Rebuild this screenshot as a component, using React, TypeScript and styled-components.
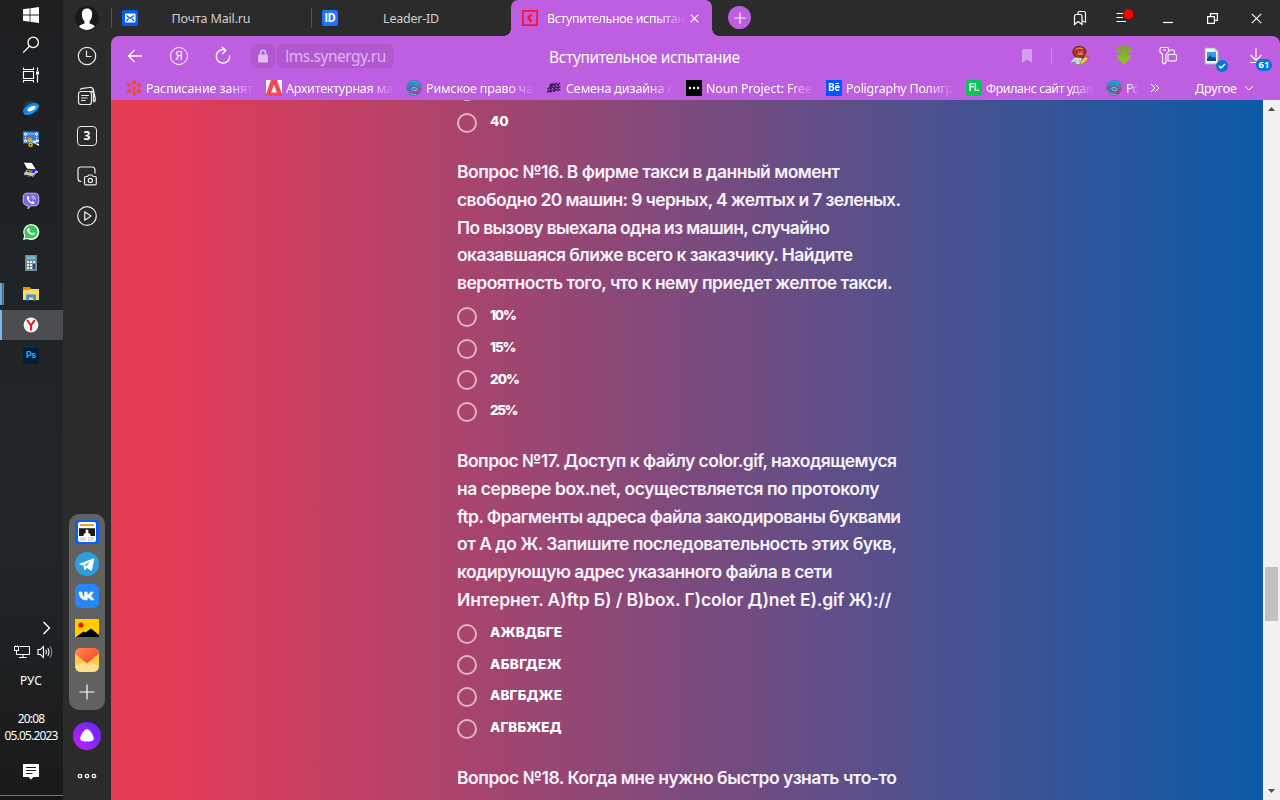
import React, { useLayoutEffect, useRef } from "react";
import styled, { createGlobalStyle, css } from "styled-components";

const PURPLE = "#be5ee0";
const UI_FONT = `"Noto Sans", "Open Sans", sans-serif`;

const GlobalStyle = createGlobalStyle`
  *, *::before, *::after { box-sizing: border-box; }
  html, body { margin: 0; padding: 0; }
  body {
    width: 1280px;
    height: 800px;
    overflow: hidden;
    background: #2b2b2b;
    font-family: ${UI_FONT};
  }
  svg { display: block; flex: none; }
`;

/* Text line whose tracking is tuned so that it spans a given width. */
const Line = styled.span`
  display: block;
  width: max-content;
  white-space: pre;
`;

function FitText({ width, children }: { width: number; children: string }) {
  const ref = useRef<HTMLSpanElement>(null);
  useLayoutEffect(() => {
    const el = ref.current;
    if (!el) return;
    el.style.letterSpacing = "0px";
    const natural = el.getBoundingClientRect().width;
    el.style.letterSpacing = `${(width - natural) / Math.max(1, children.length - 1)}px`;
  }, [width, children]);
  return <Line ref={ref}>{children}</Line>;
}

const Screen = styled.div`
  display: flex;
  width: 1280px;
  height: 800px;
  overflow: hidden;
`;

/* ---------- Windows taskbar ---------- */

const Taskbar = styled.aside`
  display: flex;
  flex-direction: column;
  width: 63px;
  height: 800px;
  background: linear-gradient(180deg, #1d1f21 0%, #202427 40%, #20262a 68%, #1c1d1e 90%, #1b1a1a 100%);
  color: #fff;
`;

const SystemButton = styled.div`
  display: flex;
  align-items: center;
  justify-content: center;
  height: 30px;
  padding-right: 1px;
`;

const Apps = styled.div`
  display: flex;
  flex-direction: column;
  margin-top: 2px;
`;

const AppButton = styled.div<{ $state?: "open" | "active" }>`
  display: flex;
  align-items: center;
  justify-content: center;
  height: 31px;
  padding-right: 1px;
  ${(p) =>
    p.$state === "active" &&
    css`
      height: 30px;
      margin: 1px 0 0;
      background: linear-gradient(90deg, #76b9ed 0 2px, #4b4d50 2px);
    `}
  ${(p) =>
    p.$state === "open" &&
    css`
      background: linear-gradient(90deg, #6fa9d8 0 2px, #3f5f7a 2px 3px, #5688b0 3px 4px, transparent 4px) 0 5px / 100% 22px no-repeat;
    `}
`;

const Tray = styled.div`
  display: flex;
  flex-direction: column;
  margin-top: auto;
  height: 184px;
  border-bottom: 4px solid #171616;
`;

const TrayChevron = styled.div`
  display: flex;
  justify-content: flex-end;
  height: 24px;
  padding: 5px 11px 0 0;
`;

const TrayIcons = styled.div`
  display: flex;
  gap: 6px;
  align-items: center;
  height: 24px;
  padding-left: 13px;
`;

const TrayText = styled.div<{ $height: number }>`
  display: flex;
  align-items: center;
  justify-content: center;
  height: ${(p) => p.$height}px;
  font-size: 12px;
  line-height: 16px;
  padding-right: 1px;
`;

const Clock = styled.div`
  display: flex;
  flex-direction: column;
  align-items: center;
  margin-top: 13px;
`;

const ActionCenter = styled.div`
  display: flex;
  align-items: center;
  justify-content: center;
  flex: 1;
  padding: 4px 1px 0 0;
  border-bottom: 1px solid #77797a;
`;

/* ---------- Browser side panel ---------- */

const SidePanel = styled.nav`
  display: flex;
  flex-direction: column;
  align-items: center;
  width: 48px;
  height: 800px;
  background: #2b2b2b;
`;

const SideButton = styled.div<{ $height?: number }>`
  display: flex;
  align-items: center;
  justify-content: center;
  width: 48px;
  height: ${(p) => p.$height ?? 40}px;
`;

const TabCount = styled.span`
  display: flex;
  align-items: center;
  justify-content: center;
  width: 20px;
  height: 20px;
  border: 1.4px solid #e9e9e9;
  border-radius: 4px;
  color: #fff;
  font-size: 12px;
  font-weight: 700;
  line-height: 16px;
`;

const Dock = styled.div`
  display: flex;
  flex-direction: column;
  align-items: center;
  gap: 8px;
  width: 36px;
  height: 196px;
  margin-top: auto;
  padding-top: 6px;
  border-radius: 10px;
  background: #616161;
`;

const PanelFoot = styled.div`
  display: flex;
  flex-direction: column;
  align-items: center;
  height: 90px;
  padding-top: 12px;
  gap: 22px;
`;

/* ---------- Browser window ---------- */

const Browser = styled.main`
  display: flex;
  flex-direction: column;
  width: 1169px;
  height: 800px;
`;

const TabStrip = styled.header`
  display: flex;
  height: 36px;
  background: #2b2b2b;
`;

const Tab = styled.div`
  display: flex;
  align-items: center;
  width: 200px;
  padding-left: 11px;
  color: #cfcfcf;
  font-size: 12.5px;
  line-height: 18px;
  background: linear-gradient(#555, #555) 0 8px / 1px 20px no-repeat;
`;

const TabTitle = styled.div`
  display: flex;
  flex: 1;
  justify-content: center;
  padding: 1px 27px 0 0;
`;

const ActiveTab = styled.div`
  position: relative;
  display: flex;
  align-items: center;
  width: 201px;
  padding: 0 11px;
  border-radius: 7px 7px 0 0;
  background: ${PURPLE};
  color: #fff;
  font-size: 12.5px;
  line-height: 18px;
  &::before,
  &::after {
    content: "";
    position: absolute;
    bottom: 0;
    width: 7px;
    height: 7px;
  }
  &::before {
    left: -7px;
    background: radial-gradient(circle at 0 0, transparent 6.5px, ${PURPLE} 7px);
  }
  &::after {
    right: -7px;
    background: radial-gradient(circle at 100% 0, transparent 6.5px, ${PURPLE} 7px);
  }
`;

const ActiveTitle = styled.div`
  width: 138px;
  margin-left: 9px;
  margin-right: 5px;
  padding-top: 1px;
  overflow: hidden;
  mask-image: linear-gradient(90deg, #000 0 112px, transparent 139px);
`;

const NewTab = styled.div`
  display: flex;
  align-items: center;
  justify-content: center;
  width: 23px;
  height: 23px;
  margin: 6px 0 0 16px;
  border-radius: 50%;
  background: ${PURPLE};
`;

const WindowButtons = styled.div`
  display: flex;
  align-items: center;
  margin-left: auto;
  padding-right: 2px;
`;

const WindowButton = styled.div`
  display: flex;
  align-items: center;
  justify-content: center;
  width: 44px;
  height: 36px;
`;

const Toolbar = styled.div`
  display: flex;
  align-items: center;
  height: 40px;
  background: ${PURPLE};
  border-radius: 8px 8px 0 0;
  color: #fff;
`;

const ToolButton = styled.div<{ $width?: number }>`
  display: flex;
  align-items: center;
  justify-content: center;
  width: ${(p) => p.$width ?? 44}px;
  height: 40px;
`;

const AddressPart = styled.div<{ $width: number; $first?: boolean }>`
  display: flex;
  align-items: center;
  justify-content: center;
  width: ${(p) => p.$width}px;
  height: 24px;
  margin-left: ${(p) => (p.$first ? 6 : 2)}px;
  border-radius: 6px;
  background: #b058d0;
  color: #e0b5ef;
  font-size: 15.5px;
  line-height: 22px;
`;

const PageTitle = styled.div`
  margin-left: 155px;
  padding-top: 1px;
  font-size: 15.5px;
  line-height: 22px;
`;

const ToolEnd = styled.div`
  display: flex;
  align-items: center;
  margin-left: auto;
  padding-right: 2px;
`;

const Divider = styled.div`
  width: 1px;
  height: 16px;
  margin-left: 19px;
  margin-right: 6px;
  background: #d08be8;
`;

const BadgeHolder = styled.div`
  position: relative;
`;

const Badge = styled.span<{ $count?: boolean }>`
  position: absolute;
  display: flex;
  align-items: center;
  justify-content: center;
  left: ${(p) => (p.$count ? 8 : 12)}px;
  top: ${(p) => (p.$count ? 12 : 13)}px;
  width: ${(p) => (p.$count ? 16 : 12)}px;
  height: 12px;
  border-radius: 6px;
  background: #0078d7;
  color: #fff;
  font-size: 9.5px;
  font-weight: 700;
  line-height: 12px;
`;

const BookmarkBar = styled.div`
  display: flex;
  align-items: center;
  height: 24px;
  padding-left: 15px;
  background: ${PURPLE};
  color: #fff;
  font-size: 12.5px;
  line-height: 18px;
`;

const BookmarkTitle = styled.div`
  padding-top: 1px;
`;

const Bookmark = styled.div<{ $short?: boolean }>`
  display: flex;
  align-items: center;
  gap: 4px;
  width: ${(p) => (p.$short ? 32 : 128)}px;
  margin-right: 12px;
  overflow: hidden;
  mask-image: ${(p) =>
    p.$short
      ? "linear-gradient(90deg, #000 0 22px, transparent 33px)"
      : "linear-gradient(90deg, #000 0 102px, transparent 129px)"};
`;

const OtherFolder = styled.div`
  display: flex;
  align-items: center;
  gap: 7px;
  margin-left: 35px;
`;

const Viewport = styled.div`
  display: flex;
  height: 700px;
`;

const Page = styled.section`
  flex: 1;
  height: 700px;
  overflow: hidden;
  padding-left: 346px;
  background: linear-gradient(90deg, #e83b55 0%, #e83b55 3%, #0c5aa7 99.5%);
  color: #f7f2f8;
  font-family: Inter, "Noto Sans", sans-serif;
`;

const Quiz = styled.div`
  display: flex;
  flex-direction: column;
  gap: 19.8px;
  margin-top: -25px;
`;

const Question = styled.div`
  display: flex;
  flex-direction: column;
`;

const QuestionText = styled.div`
  margin-bottom: 3.8px;
  font-size: 17.5px;
  font-weight: 600;
  line-height: 27.75px;
`;

const Option = styled.label`
  display: flex;
  align-items: center;
  gap: 13px;
  height: 31.66px;
  padding-top: 1px;
  color: #fff;
  font-size: 13.5px;
  font-weight: 800;
  line-height: 18px;
`;

const OptionLabel = styled.div`
  padding-bottom: 3.5px;
`;

const Radio = styled.span`
  width: 20px;
  height: 20px;
  border: 2px solid rgba(255, 255, 255, 0.6);
  border-radius: 50%;
`;

const Scrollbar = styled.div`
  display: flex;
  flex-direction: column;
  align-items: center;
  justify-content: space-between;
  width: 17px;
  height: 700px;
  padding: 7px 0 7px;
  background: linear-gradient(#c1c1c1, #c1c1c1) 2px 467px / 13px 54px no-repeat #f1f1f1;
`;

/* ---------- Icons ---------- */

const stroke = { fill: "none", stroke: "#fff", strokeWidth: 1.2 } as const;

const WindowsLogo = () => (
  <svg width="16" height="16" viewBox="0 0 16 16" fill="#fff">
    <path d="M0 2.2 6.6 1.3V7.6H0zM7.4 1.2 16 0V7.6H7.4zM0 8.4H6.6V14.7L0 13.8zM7.4 8.4H16V16L7.4 14.8z" />
  </svg>
);
const SearchIcon = () => (
  <svg width="18" height="18" viewBox="0 0 18 18" {...stroke} strokeWidth={1.3}>
    <circle cx="11.2" cy="6.4" r="5.2" /><path d="M7.4 10.2 1.2 16.6" />
  </svg>
);
const TaskViewIcon = () => (
  <svg width="18" height="18" viewBox="0 0 18 18" {...stroke} strokeWidth={1.1}>
    <path d="M1.500 1.500V3.500H11.500V1.500M1.500 16.500V14.500H11.500V16.500M1.500 5.500H11.500V12.500H1.500zM15.500 1.500V5M15.500 9V16.500" />
    <path d="M14 5.500h3v3h-3z" fill="#fff" stroke="none" />
  </svg>
);
const PlanetIcon = () => (
  <svg width="18" height="18" viewBox="0 0 18 18">
    <path d="M2 6C4 1.500 9 1.500 13 3L6 8z" fill="#22394b" />
    <ellipse cx="9" cy="9.800" rx="8.600" ry="5" transform="rotate(-28 9 9.800)" fill="#0a86ee" />
    <ellipse cx="9.600" cy="9.600" rx="4.600" ry="2" transform="rotate(-28 9.600 9.600)" fill="#fff" />
    <path d="M2.500 15C8 15.500 14 11.500 16.500 6" stroke="#28b4ff" fill="none" />
  </svg>
);
const SnipIcon = () => (
  <svg width="18" height="18" viewBox="0 0 18 18">
    <path d="M1 1.500h16v12H1z" fill="#3c7bd6" />
    <path d="M3.500 4h11v7h-11z" fill="none" stroke="#fff" strokeWidth="1.100" strokeDasharray="1 1" />
    <g fill="#3c7bd6" stroke="#fff"><circle cx="3.500" cy="4" r="1.100" /><circle cx="14.500" cy="4" r="1.100" /><circle cx="3.500" cy="11" r="1.100" /></g>
    <g fill="none" stroke="#f0b400" strokeWidth="1.500"><circle cx="8" cy="10" r="1.600" /><circle cx="8.600" cy="14.800" r="1.600" /></g>
    <path d="m10 12 7-2.500v2L12 13l5 1v2z" fill="#fff" />
  </svg>
);
const ScannerIcon = () => (
  <svg width="18" height="18" viewBox="0 0 18 18">
    <path d="m1 1 9 .5 5 8-10-1z" fill="#fff" stroke="#000" strokeWidth=".8" />
    <path d="m1 13 4-5 10 1 2 2-6 6-9-2z" fill="#c9c9c9" stroke="#000" strokeWidth=".8" />
    <path d="m4.500 11 1.500-2.500 2 .2-1.500 2.800z" fill="#e00" /><path d="m6.800 11.500 1.500-2.800h2l-1.300 3z" fill="#0a0" />
    <path d="m9.300 11.800 1.300-3 3.400.2-1.700 3z" fill="#22f" /><path d="m2 14 8.500 1.700L15 12" stroke="#222" fill="none" />
  </svg>
);
const ViberIcon = () => (
  <svg width="18" height="18" viewBox="0 0 18 18">
    <path d="M5 1.200h8c2.500 0 3.800 1.500 3.800 4v4.600c0 2.600-1.400 4-4 4H9L6 17v-3.400C2.500 13.200 1.200 12 1.200 9V5.200c0-2.500 1.300-4 3.800-4z" fill="#7b64e8" stroke="#d9d4f5" strokeWidth=".8" />
    <path d="M5.500 4.200c.9-.6 1.700 1 1.900 1.700 0 .6-.9.700-.6 1.500.5 1.200 1.400 2 2.500 2.500.8.200.9-.7 1.400-.7.8.2 2.200 1.200 1.700 2-1.600 2-4.100.1-5.300-1.100C5.800 8.600 4 5.700 5.500 4.200z" fill="#fff" />
    <path d="M9.500 4c2.300 0 3.600 1.400 3.600 3.600M9.700 5.700c1 .1 1.600.7 1.700 1.800" fill="none" stroke="#fff" strokeWidth=".8" />
  </svg>
);
const WhatsAppIcon = () => (
  <svg width="18" height="18" viewBox="0 0 18 18">
    <path d="m1 17 1.200-4.200A8 8 0 1 1 5.300 16z" fill="#f4fff6" />
    <path d="m2.500 15.500.9-3.100a6.600 6.600 0 1 1 2.400 2.300z" fill="#32c652" />
    <path d="M6.400 4.900c.9-.4 1.200.9 1.500 1.700.1.500-.7.800-.5 1.300.6 1 1.400 1.700 2.500 2.200.6.100.8-1 1.300-.9.8.3 1.800.7 1.700 1.200-.3 2-2.600 2-4 1.300-2-.9-3.700-2.800-4-4.500 0-1 .6-2 1.500-2.300z" fill="#fff" />
  </svg>
);
const CalculatorIcon = () => (
  <svg width="14" height="18" viewBox="0 0 14 18">
    <path d="M1 1h12v16H1z" fill="#7d8791" /><path d="M3 2.500h8v2.500H3z" fill="#58c9f5" />
    <path d="M3 7h2v2H3zM6 7h2v2H6zM9 7h2v2H9zM3 10h2v2H3zM6 10h2v2H6zM3 13h2v2H3zM6 13h2v2H6z" fill="#e8ebee" />
    <path d="M9 10h2v5H9z" fill="#164c83" />
  </svg>
);
const ExplorerIcon = () => (
  <svg width="18" height="18" viewBox="0 0 18 18">
    <path d="M1 2h7l1 2h8v3H1z" fill="#dd9d08" /><path d="M1 5h7l1-1h8v11H1z" fill="#ffd663" />
    <path d="M4 15.500V9.500h10v6h-3v-3H7v3z" fill="#3d92dd" />
  </svg>
);
const YandexIcon = () => (
  <svg width="16" height="16" viewBox="0 0 16 16">
    <circle cx="8" cy="8" r="7.400" fill="#f5f5f5" />
    <path d="M4.200 3 8 8.600l3.800-5.600M8 8.200V13.500" fill="none" stroke="#e0141c" strokeWidth="1.900" />
  </svg>
);

const LetterTile = styled.span<{ $bg: string; $fg: string; $size?: number; $radius?: number; $font?: number }>`
  display: flex;
  flex: none;
  align-items: center;
  justify-content: center;
  width: ${(p) => p.$size ?? 16}px;
  height: ${(p) => p.$size ?? 16}px;
  border-radius: ${(p) => p.$radius ?? 0}px;
  background: ${(p) => p.$bg};
  color: ${(p) => p.$fg};
  font-family: Roboto, sans-serif;
  font-size: ${(p) => p.$font ?? 9}px;
  font-weight: 700;
  line-height: 1;
  letter-spacing: -0.2px;
`;

const NetworkIcon = () => (
  <svg width="18" height="16" viewBox="0 0 18 16" {...stroke} strokeWidth={1}>
    <path d="M6.500 2.500H16.500V10.500H3.500V7M10 10.500V13.500M6 13.500H13.500M1.500 2.500H5.500V6.500H1.500zM3.500 6.500V8M2.500 1.500V3M4.500 1.500V3" />
  </svg>
);
const SpeakerIcon = () => (
  <svg width="18" height="16" viewBox="0 0 18 16" {...stroke} strokeWidth={1.1}>
    <path d="M1 5.500H3.500L6.500 2.500V13.500L3.500 10.500H1z" /><path d="M8.800 5.700Q10.200 8 8.800 10.300M10.800 4.200Q13.200 8 10.800 11.800" />
    <path d="M13 2.500Q16.800 8 13 13.500" stroke="#8c8c8c" />
  </svg>
);
const NoticeIcon = () => (
  <svg width="18" height="18" viewBox="0 0 18 18">
    <path d="M1 1H17V14H11.500L9 16.500 6.500 14H1z" fill="#fff" />
    <path d="M4 4.500H14M4 7.500H14M4 10.500H10.500" stroke="#1d1d1d" />
  </svg>
);

const AvatarIcon = () => (
  <svg width="24" height="24" viewBox="0 0 24 24">
    <circle cx="12" cy="12" r="12" fill="#1a1a1a" />
    <path d="M12 2.500c3.600 0 5.300 2.500 5.100 6-.1 3-1.200 5.600-2.500 6.600v2.400c2 .8 4.600 1.600 5.300 3A12 12 0 0 1 12 24a12 12 0 0 1-8-3.500c.8-1.400 3.400-2.200 5.400-3v-2.400C8 14 7 11.500 6.900 8.500c-.1-3.500 1.500-6 5.100-6z" fill="#fff" />
  </svg>
);
const side = { fill: "none", stroke: "#ececec", strokeWidth: 1.2, strokeLinecap: "round", strokeLinejoin: "round" } as const;
const ClockIcon = () => (
  <svg width="20" height="20" viewBox="0 0 20 20" {...side}><circle cx="10" cy="10" r="8.700" /><path d="M9.500 5V10.500H14" /></svg>
);
const NotesIcon = () => (
  <svg width="20" height="20" viewBox="0 0 20 20" {...side}>
    <rect x="1.500" y="5.500" width="13" height="13" rx="2.500" />
    <path d="M4.500 9.500H11.500M4.500 12H10M4.500 14.500H8M3.300 3.500C3.800 2.600 4.800 2.500 6 2.300L12.500 1.500C14.800 1.200 16 2 16.400 4L18.300 12.500C18.500 14 17.800 15.500 16.700 15.800M14 5.200C15.500 5.200 16.300 6.200 16.500 7.500V14.500" />
  </svg>
);
const CaptureIcon = () => (
  <svg width="22" height="20" viewBox="0 0 22 20" {...side}>
    <path d="M5 15.500C3 15.500 2 14.500 2 12.500V4C2 2 3 1 5 1H16C18 1 19 2 19 4V7" />
    <path d="M8.500 11.700C8.500 10.900 9 10.500 9.700 10.500H11.500L12.700 9H16L17.200 10.500H19C19.800 10.500 20.300 10.900 20.300 11.700V17.500C20.300 18.300 19.800 18.800 19 18.800H9.800C9 18.800 8.500 18.300 8.500 17.500z" />
    <circle cx="14.400" cy="14.400" r="2.100" />
  </svg>
);
const PlayIcon = () => (
  <svg width="20" height="20" viewBox="0 0 20 20" {...side}><circle cx="10" cy="10" r="9.300" /><path d="M7.700 5.800V14.200L14 10z" /></svg>
);

const NewsIcon = () => (
  <svg width="24" height="24" viewBox="0 0 24 24">
    <rect width="24" height="24" rx="4" fill="#0860f6" /><rect x="3" y="2" width="18" height="20" rx="2" fill="#fff" />
    <path d="M5 4H19V6H5z" fill="#f7a21b" /><path d="M4 8H20V16H4z" fill="#171717" />
    <path d="M4 8H20V9H4z" fill="#555" />
    <path d="M12 9.500a1.500 1.500 0 0 1 .9 2.700L15.500 14.500V16H8.500V14.500L11.100 12.200A1.500 1.500 0 0 1 12 9.500z" fill="#fff" />
    <path d="M5 18H11M5 20H11M13 18H19M13 20H19" stroke="#bbb" />
  </svg>
);
const TelegramIcon = () => (
  <svg width="24" height="24" viewBox="0 0 24 24">
    <circle cx="12" cy="12" r="12" fill="#2ba0db" />
    <path d="M4.500 11.800 18.200 6.500c.8-.3 1.200.2 1 1L17 18c-.2.800-.7 1-1.300.6L12 16l-2 1.900c-.4.300-.7.100-.8-.4L8.500 13.500l-3.900-1c-.6-.2-.6-.5-.1-.7zM9.500 13.300 15.800 9 11 14.300z" fill="#fff" fillRule="evenodd" />
  </svg>
);
const VkIcon = () => (
  <svg width="24" height="24" viewBox="0 0 24 24">
    <rect width="24" height="24" rx="6" fill="#2787f5" />
    <path d="M4 8H6.800C7 11 8.200 12.800 9.600 13.200V8H12.200V11C13.700 10.800 15 9.500 15.500 8H18.100C17.700 9.800 16.700 11.200 15.500 12 16.900 12.700 18.200 14 18.800 16H16C15.400 14.600 14 13.700 12.200 13.400V16H11.500C7 16 4.200 13 4 8z" fill="#fff" stroke="#fff" strokeWidth=".6" />
  </svg>
);
const PictureIcon = () => (
  <svg width="24" height="24" viewBox="0 0 24 24">
    <path d="M0 3H24V21H0z" fill="#fc0" /><circle cx="6" cy="9" r="2.600" fill="#e5140d" />
    <path d="M1 21 8.500 15.500 10.500 16.500 16 12.500 24 19V21z" fill="#000" />
  </svg>
);
const MailYandexIcon = () => (
  <svg width="24" height="24" viewBox="0 0 24 24">
    <defs><linearGradient id="flap" x1="0" y1="0" x2="1" y2="1"><stop offset="0" stopColor="#ff8a4f" /><stop offset="1" stopColor="#fb3f1c" /></linearGradient></defs>
    <rect width="24" height="24" rx="6" fill="#ffc94a" />
    <path d="M0 18 12 13 24 18A6 6 0 0 1 18 24H6A6 6 0 0 1 0 18z" fill="#ffe08a" />
    <path d="M0 5.500A6 6 0 0 1 6 0H18A6 6 0 0 1 24 5.500L12 15.500z" fill="url(#flap)" />
  </svg>
);
const PlusIcon = ({ size }: { size: number }) => (
  <svg width={size} height={size} viewBox="0 0 24 24" fill="none" stroke="#fff" strokeWidth={28 / size}><path d="M12 4.500V19.500M4.500 12H19.500" /></svg>
);
const AliceIcon = () => (
  <svg width="28" height="28" viewBox="0 0 28 28">
    <defs><linearGradient id="alice" x1="1" y1="0" x2="0" y2="1"><stop offset="0" stopColor="#5a2bff" /><stop offset="1" stopColor="#c31df5" /></linearGradient></defs>
    <circle cx="14" cy="14" r="14" fill="url(#alice)" />
    <path d="M14 7c2.500 0 6.800 6.500 6.800 9.400C20.800 19 17 19.600 14 19.600S7.200 19 7.200 16.400C7.200 13.500 11.500 7 14 7z" fill="#fff" />
  </svg>
);
const MoreIcon = () => (
  <svg width="20" height="8" viewBox="0 0 20 8" fill="none" stroke="#f2f2f2" strokeWidth="1.300">
    <circle cx="3" cy="4" r="1.700" /><circle cx="10" cy="4" r="1.700" /><circle cx="17" cy="4" r="1.700" />
  </svg>
);

const MailRuIcon = () => (
  <svg width="16" height="16" viewBox="0 0 16 16">
    <rect width="16" height="16" rx="2" fill="#005ff9" /><rect x="3" y="3.500" width="10.500" height="9" rx="1" fill="#fff" />
    <path d="m4.500 5.500 3.700 3 3.800-3M4.500 11 6.500 8.800M12 11 10 8.800" fill="none" stroke="#005ff9" strokeWidth="1.300" />
  </svg>
);
const SynergyIcon = () => (
  <svg width="16" height="16" viewBox="0 0 16 16" fill="none" stroke="#fa1432">
    <path d="M.9.900H15.100V15.100H.9z" strokeWidth="1.800" /><path d="M9.300 4.200 6.500 8 9.300 11.800" strokeWidth="2.300" />
  </svg>
);
const CrossIcon = ({ size }: { size: number }) => (
  <svg width={size} height={size} viewBox="0 0 10 10" {...stroke} strokeWidth={11 / size}><path d="m.7.700 8.600 8.600M9.300.700.700 9.300" /></svg>
);
const CollectionsIcon = () => (
  <svg width="14" height="16" viewBox="0 0 14 16" {...stroke}>
    <path d="M1.500 14.500V6Q1.500 4.500 3 4.500H7.500Q9 4.500 9 6V14.500L5.300 11.500zM5 4V3.200Q5 1.500 6.500 1.500H11Q12.500 1.500 12.500 3.200V12.200L9.500 11" />
  </svg>
);
const MenuIcon = () => (
  <svg width="18" height="18" viewBox="0 0 18 18" {...stroke} strokeWidth={1.1}>
    <path d="M1.500 4.500H8M1.500 8.500H8M1.500 12.500H11" /><circle cx="13.500" cy="5.200" r="5" fill="#f00" stroke="none" />
  </svg>
);
const MinimizeIcon = () => (
  <svg width="10" height="12" viewBox="0 0 10 12" {...stroke}><path d="M0 10.500H10" /></svg>
);
const RestoreIcon = () => (
  <svg width="11" height="11" viewBox="0 0 11 11" {...stroke}><path d="M.6 3.600H7.400V10.400H.6zM3.500 3.500V.6H10.400V7.400H7.500" /></svg>
);
const BackIcon = () => (
  <svg width="16" height="14" viewBox="0 0 16 14" {...stroke} strokeWidth={1.3}><path d="M15 7H1.500M7.500 1 1.500 7 7.500 13" /></svg>
);
const YaRing = styled.span`
  display: flex;
  align-items: center;
  justify-content: center;
  width: 18px;
  height: 18px;
  margin-right: 1px;
  border: 1.2px solid #fff;
  border-radius: 50%;
  font-family: "Open Sans", sans-serif;
  font-size: 12px;
  line-height: 14px;
`;
const ReloadIcon = () => (
  <svg width="18" height="20" viewBox="0 0 18 20" {...stroke} strokeWidth={1.4}>
    <path d="M15.600 9.500A6.700 6.700 0 1 1 11.500 4.200M7.800 1 11.800 4.300 8.300 8" />
  </svg>
);
const LockIcon = () => (
  <svg width="12" height="14" viewBox="0 0 12 14">
    <rect x="1" y="5.500" width="10" height="8" rx="1.500" fill="#e2bdf0" /><path d="M3.500 6V3.700a2.500 2.500 0 0 1 5 0V6" fill="none" stroke="#e2bdf0" strokeWidth="1.500" />
  </svg>
);
const BookmarkIcon = () => (
  <svg width="10" height="14" viewBox="0 0 10 14"><path d="M0 1.500Q0 0 1.500 0H8.500Q10 0 10 1.500V14L5 10.500 0 14z" fill="#d89eec" /></svg>
);
const GladiatorIcon = () => (
  <svg width="20" height="20" viewBox="0 0 20 20">
    <path d="M3 8C2 3 5 .5 9 .5S16 2 16 6L13.500 11.500H6z" fill="#a93418" stroke="#5a1c12" strokeWidth=".8" />
    <path d="M5.500 3.500Q9 1 13 3" stroke="#e78b66" fill="none" strokeWidth="1.300" /><path d="M8 5.500h5v3.500H8z" fill="#d8805c" /><path d="M9 6.500h1M11.500 6.500h1" stroke="#631e14" />
    <path d="M1 15 5 11.500 12 12 10 18.500H6L4.500 15.500 1 17z" fill="#dce9f0" stroke="#71848f" strokeWidth=".6" />
    <path d="M6 13V18M9 13V17" stroke="#8fa6b2" /><path d="m10 18.800.8-3.300 5.200-5 2.300 2.300-5.500 5z" fill="#f6d33a" stroke="#8c7410" strokeWidth=".6" /><path d="m16 10.500 1.200-1.200 2.300 2.200-1.200 1.300z" fill="#e04747" />
  </svg>
);
const GreenArrowIcon = () => (
  <svg width="20" height="20" viewBox="0 0 20 20">
    <defs><linearGradient id="arrow" x1="0" y1="0" x2="0" y2="1"><stop offset="0" stopColor="#7d9f2a" /><stop offset="1" stopColor="#8ccf14" /></linearGradient></defs>
    <path d="M2 1.500 5.500.5V7.500L1.500 5 3.500 4.200zM18 1.500 14.500.5V7.500L18.500 5 16.500 4.200z" fill="#80b51e" />
    <path d="M6.500 0H13.500V9H19L10 18.800 1 9H6.500z" fill="url(#arrow)" />
  </svg>
);
const KeysIcon = () => (
  <svg width="20" height="20" viewBox="0 0 20 20" {...stroke} strokeWidth={1.1} strokeLinejoin="round">
    <path d="M3 1.500H9.500Q10.500 1.500 10.500 3V5.500L8 8.500V11L7.200 12 8 13V16.500L6.500 18 4.500 16.500V8.500L2 6V3Q2 1.500 3 1.500zM5 4H8" />
    <path d="M10.800 5Q11.500 4 13 4H14.500Q16.500 4 16.500 6V8.500M10 8.500H17Q18.500 8.500 18.500 10V13.500Q18.500 15 17 15H10.500M10 8.500V15" />
  </svg>
);
const FilePictureIcon = () => (
  <svg width="16" height="18" viewBox="0 0 16 18">
    <path d="M1 1H10.500L14 4.500V17H1z" fill="#f2f4f5" stroke="#a8adb0" /><path d="M10.500 1V4.500H14" fill="#ccd5da" />
    <path d="M3 5H12V14H3z" fill="#2f9fe8" /><path d="m3 12 3-4 3 3 1-1.500 2 2V14H3z" fill="#0b4d89" />
  </svg>
);
const DownloadIcon = () => (
  <svg width="16" height="18" viewBox="0 0 16 18" {...stroke} strokeWidth={1.1}><path d="M8 1V13.500M2.500 8 8 13.500 13.500 8M2 15.500H8" /></svg>
);
const CheckIcon = () => (
  <svg width="8" height="8" viewBox="0 0 8 8" {...stroke} strokeWidth={1.4}><path d="M1 4 3 6 7 2" /></svg>
);

const FlowerIcon = () => (
  <svg width="16" height="16" viewBox="0 0 16 16">
    <path d="M8 3 12.500 5.500V10.500L8 13 3.500 10.500V5.500z" fill="none" stroke="#f04a24" strokeWidth="1.200" strokeDasharray="2.500 1" />
    <g fill="#f04a24"><circle cx="8" cy="2.200" r="1.900" /><circle cx="13.300" cy="4.800" r="1.800" /><circle cx="13.300" cy="11.200" r="1.800" /><circle cx="8" cy="13.800" r="1.900" /><circle cx="2.700" cy="11.200" r="1.800" /><circle cx="2.700" cy="4.800" r="1.800" /><circle cx="8" cy="7.500" r="1.400" /><path d="M7.300 8h1.400v4H7.300z" /></g>
  </svg>
);
const ArchIcon = () => (
  <svg width="16" height="16" viewBox="0 0 16 16"><path d="M0 0H16V16H0z" fill="#f5475c" /><path d="M0 0H5L0 14zM11 0H16V14z" fill="#fff" /><path d="M8 4.500 10.700 12.500H5.300z" fill="#fff" /></svg>
);
const GlobeIcon = () => (
  <svg width="16" height="16" viewBox="0 0 16 16">
    <circle cx="8" cy="8" r="7.700" fill="#3d6fb0" />
    <path d="M2 3.500Q6 .5 13 4.500M1 6Q8 2 15 7M5 1.300Q10 .8 13.500 3.500" fill="none" stroke="#22a5cc" strokeWidth="1.200" />
    <ellipse cx="8.500" cy="9" rx="5.200" ry="3.300" transform="rotate(12 8.500 9)" fill="none" stroke="#c9447c" strokeWidth="1.100" />
    <ellipse cx="8.500" cy="9" rx="2.800" ry="1.400" transform="rotate(12 8.500 9)" fill="none" stroke="#8ccbea" strokeWidth=".9" />
    <path d="M1 10.500Q4 15 10 14.500" fill="none" stroke="#86b7e0" strokeWidth=".9" /><path d="M12.500 12.500Q15 11 15.300 8" fill="none" stroke="#e03560" strokeWidth="1.400" />
  </svg>
);
const SeedsIcon = () => (
  <svg width="16" height="16" viewBox="0 0 16 16" fill="none" stroke="#35144b" strokeWidth="1.100">
    <path d="M3.500 6.500 5 4 6 6 7 3.500 8.500 5.500 10 3 11.500 5 14 3M1.500 9.500 3.500 7.500 5 9 6.500 7 8 8.700 9.500 6.500 11.500 8 14.500 6.500M1 12.500 3 10.500 4.500 12 6.500 10.200 8 11.500 10 9.500 12 10.500 14.500 9.500M5 5 4.500 11M9 4 8.500 11M12.500 4 12 10" />
  </svg>
);
const DotsTile = () => (
  <svg width="16" height="16" viewBox="0 0 16 16"><path d="M0 0H16V16H0z" /><g fill="#fff"><circle cx="3.900" cy="8" r="1.200" /><circle cx="8" cy="8" r="1.200" /><circle cx="12.100" cy="8" r="1.200" /></g></svg>
);
const ChevronsIcon = () => (
  <svg width="10" height="10" viewBox="0 0 10 10" {...stroke} strokeWidth={1}><path d="M1 1 5 5 1 9M5 1 9 5 5 9" /></svg>
);
const ChevronDown = () => (
  <svg width="10" height="6" viewBox="0 0 10 6" {...stroke} strokeWidth={1}><path d="M1 1 5 5 9 1" /></svg>
);
const ChevronRight = () => (
  <svg width="10" height="14" viewBox="0 0 10 14" {...stroke} strokeWidth={1.4}><path d="M1.500 1 7.500 7 1.500 13" /></svg>
);

/* ---------- Data ---------- */

type TextLine = [string, number];

const bookmarks: { icon: React.ReactNode; text: string; width: number }[] = [
  { icon: <FlowerIcon />, text: "Расписание занят", width: 107 },
  { icon: <ArchIcon />, text: "Архитектурная ма", width: 107 },
  { icon: <GlobeIcon />, text: "Римское право ча", width: 107 },
  { icon: <SeedsIcon />, text: "Семена дизайна /", width: 106 },
  { icon: <DotsTile />, text: "Noun Project: Free", width: 106 },
  { icon: <LetterTile $bg="#0057ff" $fg="#fff" $font={10}>Bē</LetterTile>, text: "Poligraphy Полигр", width: 107 },
  { icon: <LetterTile $bg="#00c853" $fg="#fff" $radius={3} $font={10}>FL</LetterTile>, text: "Фриланс сайт удал", width: 107 },
];

const questions: { lines: TextLine[]; options: TextLine[] }[] = [
  { lines: [], options: [["", 0], ["40", 18.5]] },
  {
    lines: [
      ["Вопрос №16. В фирме такси в данный момент", 383],
      ["свободно 20 машин: 9 черных, 4 желтых и 7 зеленых.", 444],
      ["По вызову выехала одна из машин, случайно", 373],
      ["оказавшаяся ближе всего к заказчику. Найдите", 396],
      ["вероятность того, что к нему приедет желтое такси.", 435.5],
    ],
    options: [["10%", 27], ["15%", 26.5], ["20%", 30], ["25%", 28.5]],
  },
  {
    lines: [
      ["Вопрос №17. Доступ к файлу color.gif, находящемуся", 440],
      ["на сервере box.net, осуществляется по протоколу", 422.5],
      ["ftp. Фрагменты адреса файла закодированы буквами", 444],
      ["от А до Ж. Запишите последовательность этих букв,", 440],
      ["кодирующую адрес указанного файла в сети", 375.5],
      ["Интернет. А)ftp Б) / В)box. Г)color Д)net Е).gif Ж)://", 434.5],
    ],
    options: [["АЖВДБГЕ", 72], ["АБВГДЕЖ", 71.5], ["АВГБДЖЕ", 72], ["АГВБЖЕД", 71.5]],
  },
  { lines: [["Вопрос №18. Когда мне нужно быстро узнать что-то", 440]], options: [] },
];

export default function App() {
  return (
    <>
      <GlobalStyle />
      <Screen>
        <Taskbar>
          <SystemButton><WindowsLogo /></SystemButton>
          <SystemButton><SearchIcon /></SystemButton>
          <SystemButton><TaskViewIcon /></SystemButton>
          <Apps>
            <AppButton><PlanetIcon /></AppButton>
            <AppButton><SnipIcon /></AppButton>
            <AppButton><ScannerIcon /></AppButton>
            <AppButton><ViberIcon /></AppButton>
            <AppButton><WhatsAppIcon /></AppButton>
            <AppButton><CalculatorIcon /></AppButton>
            <AppButton $state="open"><ExplorerIcon /></AppButton>
            <AppButton $state="active"><YandexIcon /></AppButton>
            <AppButton><LetterTile $bg="#001e36" $fg="#31a8ff" $radius={2}>Ps</LetterTile></AppButton>
          </Apps>
          <Tray>
            <TrayChevron><ChevronRight /></TrayChevron>
            <TrayIcons><NetworkIcon /><SpeakerIcon /></TrayIcons>
            <TrayText $height={33}><FitText width={22}>РУС</FitText></TrayText>
            <Clock>
              <TrayText $height={17}><FitText width={27.5}>20:08</FitText></TrayText>
              <TrayText $height={17}><FitText width={54}>05.05.2023</FitText></TrayText>
            </Clock>
            <ActionCenter><NoticeIcon /></ActionCenter>
          </Tray>
        </Taskbar>

        <SidePanel>
          <SideButton $height={36}><AvatarIcon /></SideButton>
          <SideButton><ClockIcon /></SideButton>
          <SideButton><NotesIcon /></SideButton>
          <SideButton><TabCount>3</TabCount></SideButton>
          <SideButton><CaptureIcon /></SideButton>
          <SideButton><PlayIcon /></SideButton>
          <Dock>
            <NewsIcon />
            <TelegramIcon />
            <VkIcon />
            <PictureIcon />
            <MailYandexIcon />
            <PlusIcon size={24} />
          </Dock>
          <PanelFoot>
            <AliceIcon />
            <MoreIcon />
          </PanelFoot>
        </SidePanel>

        <Browser>
          <TabStrip>
            <Tab>
              <MailRuIcon />
              <TabTitle><FitText width={79}>Почта Mail.ru</FitText></TabTitle>
            </Tab>
            <Tab>
              <LetterTile $bg="#1f74ff" $fg="#fff" $radius={2} $font={12}>ID</LetterTile>
              <TabTitle><FitText width={56}>Leader-ID</FitText></TabTitle>
            </Tab>
            <ActiveTab>
              <SynergyIcon />
              <ActiveTitle><FitText width={138}>Вступительное испытан</FitText></ActiveTitle>
              <CrossIcon size={9} />
            </ActiveTab>
            <NewTab><PlusIcon size={18} /></NewTab>
            <WindowButtons>
              <WindowButton><CollectionsIcon /></WindowButton>
              <WindowButton><MenuIcon /></WindowButton>
              <WindowButton><MinimizeIcon /></WindowButton>
              <WindowButton><RestoreIcon /></WindowButton>
              <WindowButton><CrossIcon size={11} /></WindowButton>
            </WindowButtons>
          </TabStrip>

          <Toolbar>
            <ToolButton $width={47}><BackIcon /></ToolButton>
            <ToolButton $width={43}><YaRing>Я</YaRing></ToolButton>
            <ToolButton><ReloadIcon /></ToolButton>
            <AddressPart $width={24} $first><LockIcon /></AddressPart>
            <AddressPart $width={117}><FitText width={101}>lms.synergy.ru</FitText></AddressPart>
            <PageTitle><FitText width={191}>Вступительное испытание</FitText></PageTitle>
            <ToolEnd>
              <BookmarkIcon />
              <Divider />
              <ToolButton><GladiatorIcon /></ToolButton>
              <ToolButton><GreenArrowIcon /></ToolButton>
              <ToolButton><KeysIcon /></ToolButton>
              <ToolButton>
                <BadgeHolder><FilePictureIcon /><Badge><CheckIcon /></Badge></BadgeHolder>
              </ToolButton>
              <ToolButton>
                <BadgeHolder><DownloadIcon /><Badge $count>61</Badge></BadgeHolder>
              </ToolButton>
            </ToolEnd>
          </Toolbar>

          <BookmarkBar>
            {bookmarks.map((b) => (
              <Bookmark key={b.text}>
                {b.icon}
                <BookmarkTitle><FitText width={b.width}>{b.text}</FitText></BookmarkTitle>
              </Bookmark>
            ))}
            <Bookmark $short>
              <GlobeIcon />
              <BookmarkTitle><FitText width={14}>Ро</FitText></BookmarkTitle>
            </Bookmark>
            <ChevronsIcon />
            <OtherFolder>
              <BookmarkTitle><FitText width={42}>Другое</FitText></BookmarkTitle>
              <ChevronDown />
            </OtherFolder>
          </BookmarkBar>

          <Viewport>
            <Page>
              <Quiz>
                {questions.map((q, i) => (
                  <Question key={i}>
                    {q.lines.length > 0 && (
                      <QuestionText>
                        {q.lines.map(([text, width]) => <FitText key={text} width={width}>{text}</FitText>)}
                      </QuestionText>
                    )}
                    {q.options.map(([text, width]) => (
                      <Option key={text}>
                        <Radio />
                        {text && <OptionLabel><FitText width={width}>{text}</FitText></OptionLabel>}
                      </Option>
                    ))}
                  </Question>
                ))}
              </Quiz>
            </Page>
            <Scrollbar>
              <svg width="7" height="4" viewBox="0 0 7 4"><path d="M0 4 3.500 0 7 4z" fill="#505050" /></svg>
              <svg width="7" height="4" viewBox="0 0 7 4"><path d="M0 0 3.500 4 7 0z" fill="#505050" /></svg>
            </Scrollbar>
          </Viewport>
        </Browser>
      </Screen>
    </>
  );
}
